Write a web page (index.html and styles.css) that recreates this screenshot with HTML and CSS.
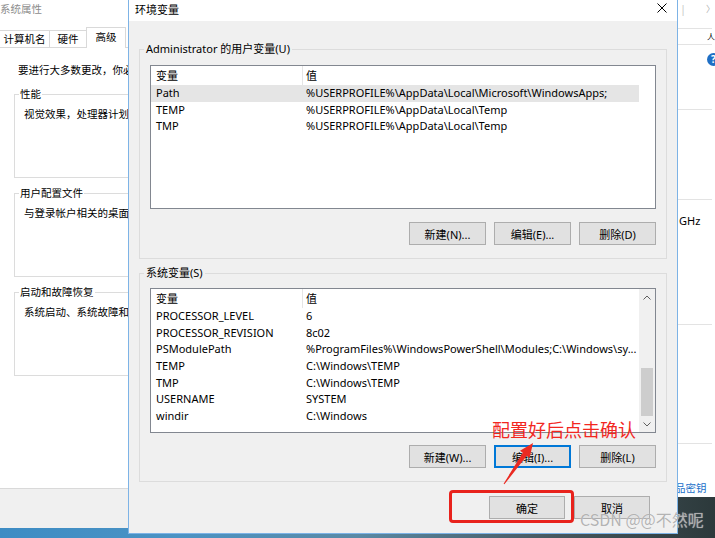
FILE: index.html
```html
<!DOCTYPE html>
<html lang="zh-CN">
<head>
    <meta charset="UTF-8">
    <meta name="viewport" content="width=device-width, initial-scale=1.0">
    <title>环境变量</title>
    <link rel="stylesheet" href="styles.css">
</head>
<body>
    <div class="desktop">
        <!-- 系统属性 (behind, only the left strip shows) -->
        <div class="sys-window">
            <div class="sys-title">系统属性</div>
            <div class="tabs">
                <div class="tab tab-first">计算机名</div>
                <div class="tab tab-hw">硬件</div>
                <div class="tab active">高级</div>
            </div>
            <div class="tab-panel">
                <p class="admin-note">要进行大多数更改，你必</p>
                <fieldset class="sys-group">
                    <legend>性能</legend>
                    <p>视觉效果，处理器计划</p>
                </fieldset>
                <fieldset class="sys-group">
                    <legend>用户配置文件</legend>
                    <p>与登录帐户相关的桌面</p>
                </fieldset>
                <fieldset class="sys-group">
                    <legend>启动和故障恢复</legend>
                    <p>系统启动、系统故障和</p>
                </fieldset>
            </div>
            <div class="sys-footer"></div>
        </div>

        <!-- 右侧窗口 (behind) -->
        <div class="side-window">
            <div class="side-sec side-top"><span class="side-bar">|</span><span class="side-arrow">〉</span></div>
            <div class="side-sec side-s2"><span class="side-glyph">人</span></div>
            <div class="side-sec side-s3"><span class="help-icon">?</span></div>
            <div class="side-sec side-s4"></div>
            <div class="side-sec side-s5"><span class="ghz">GHz</span></div>
            <div class="side-sec side-s6"></div>
            <div class="side-s7"><span class="product-key">品密钥</span></div>
        </div>

        <!-- 环境变量 -->
        <div class="env-dialog">
            <div class="dialog-title">
                <span>环境变量</span>
                <svg class="close-icon" viewBox="0 0 10 10">
                    <path d="M0.5 0.5 L9.5 9.5 M9.5 0.5 L0.5 9.5" stroke="#000" stroke-width="1" fill="none"/>
                </svg>
            </div>
            <div class="dialog-body">
                <fieldset class="var-group">
                    <legend>Administrator 的用户变量(U)</legend>
                    <div class="var-list">
                        <div class="var-rows">
                            <div class="var-row var-head"><span>变量</span><span>值</span></div>
                            <div class="var-row selected"><span>Path</span><span>%USERPROFILE%\AppData\Local\Microsoft\WindowsApps;</span></div>
                            <div class="var-row"><span>TEMP</span><span>%USERPROFILE%\AppData\Local\Temp</span></div>
                            <div class="var-row"><span>TMP</span><span>%USERPROFILE%\AppData\Local\Temp</span></div>
                        </div>
                    </div>
                    <div class="btn-row">
                        <button class="btn">新建(N)...</button>
                        <button class="btn">编辑(E)...</button>
                        <button class="btn">删除(D)</button>
                    </div>
                </fieldset>

                <fieldset class="var-group sys-vars">
                    <legend>系统变量(S)</legend>
                    <div class="var-list">
                        <div class="var-rows">
                            <div class="var-row var-head"><span>变量</span><span>值</span></div>
                            <div class="var-row"><span>PROCESSOR_LEVEL</span><span>6</span></div>
                            <div class="var-row"><span>PROCESSOR_REVISION</span><span>8c02</span></div>
                            <div class="var-row"><span>PSModulePath</span><span>%ProgramFiles%\WindowsPowerShell\Modules;C:\Windows\sy...</span></div>
                            <div class="var-row"><span>TEMP</span><span>C:\Windows\TEMP</span></div>
                            <div class="var-row"><span>TMP</span><span>C:\Windows\TEMP</span></div>
                            <div class="var-row"><span>USERNAME</span><span>SYSTEM</span></div>
                            <div class="var-row"><span>windir</span><span>C:\Windows</span></div>
                        </div>
                        <div class="scrollbar">
                            <div class="scroll-btn scroll-up">
                                <svg viewBox="0 0 8 5"><polyline points="0.5,4.5 4,1 7.5,4.5" stroke="#606060" fill="none"/></svg>
                            </div>
                            <div class="scroll-track"><div class="scroll-thumb"></div></div>
                            <div class="scroll-btn scroll-down">
                                <svg viewBox="0 0 8 5"><polyline points="0.5,0.5 4,4 7.5,0.5" stroke="#606060" fill="none"/></svg>
                            </div>
                        </div>
                    </div>
                    <div class="btn-row">
                        <button class="btn">新建(W)...</button>
                        <button class="btn focused">编辑(I)...</button>
                        <button class="btn">删除(L)</button>
                    </div>
                </fieldset>

                <div class="dialog-footer">
                    <button class="btn">确定</button>
                    <button class="btn">取消</button>
                </div>
            </div>
        </div>

        <!-- 标注 -->
        <div class="annotation-text">配置好后点击确认</div>
        <svg class="annotation-arrow" viewBox="0 0 36 48">
            <polygon points="33,3 29.7,17.8 26.8,15.8 4.4,44.3 3.6,43.7 22.8,12.8 20,10.8" fill="#ea2a22"/>
        </svg>
        <div class="annotation-box"></div>
        <div class="watermark">CSDN @@不然呢</div>
    </div>
</body>
</html>
```

FILE: styles.css
```css
* {
    box-sizing: border-box;
}

body {
    margin: 0;
    font-family: "Noto Sans", "Noto Sans CJK SC", sans-serif;
    font-size: 11px;
    color: #000;
    overflow: hidden;
}

.desktop {
    position: relative;
    width: 715px;
    height: 538px;
    overflow: hidden;
    background: linear-gradient(90deg, #3d8cc4 0%, #4b93c4 25%, #5a8aa6 50%, #46575d 78%, #2c393b 100%);
}

/* 系统属性 */
.sys-window {
    position: absolute;
    left: 0;
    top: 0;
    width: 129px;
    height: 528px;
    background: #fff;
    display: flex;
    flex-direction: column;
    overflow: hidden;
    font-size: 10.5px;
}

.sys-title {
    height: 22px;
    line-height: 18px;
    color: #8c8c8c;
}

.tabs {
    height: 25px;
    display: flex;
    align-items: flex-end;
    margin-left: -1px;
}

.tab {
    height: 17px;
    border: 1px solid #d9d9d9;
    border-bottom: none;
    line-height: 16px;
    text-align: center;
    background: #fff;
    flex-shrink: 0;
}

.tab-first {
    width: 51px;
}

.tab-hw {
    width: 38px;
    margin-left: -1px;
}

.tab.active {
    width: 40px;
    height: 21px;
    margin-left: -1px;
    margin-bottom: -1px;
    line-height: 19px;
    position: relative;
    z-index: 1;
}

.tab-panel {
    width: 420px;
    height: 442px;
    margin-left: -1px;
    border: 1px solid #d9d9d9;
    padding-top: 14px;
    background: #fff;
    flex-shrink: 0;
}

.admin-note {
    margin: 0 0 9px 18px;
    line-height: 16px;
    white-space: nowrap;
}

.sys-group {
    width: 400px;
    height: 91px;
    margin: 0 0 8px 14px;
    padding: 0;
    border: 1px solid #dcdcdc;
}

.sys-group legend {
    margin-left: 4px;
    padding: 0 1px;
    line-height: 14px;
}

.sys-group p {
    margin: 5px 0 0 9px;
    line-height: 16px;
    white-space: nowrap;
}

.sys-footer {
    flex: 1;
    background: #f0f0f0;
}

/* 右侧窗口 */
.side-window {
    position: absolute;
    left: 678px;
    top: 0;
    width: 37px;
    height: 497px;
    background: #fff;
    overflow: hidden;
}

.side-sec {
    margin-right: 3px;
    border-bottom: 1px solid #e3e3e3;
    position: relative;
}

.side-top {
    height: 29px;
    color: #c8c8c8;
    display: flex;
    justify-content: space-between;
    line-height: 17px;
    padding-left: 2px;
}

.side-arrow {
    margin-right: -3px;
    color: #b0b0b0;
    font-size: 9px;
}

.side-s2 {
    height: 16px;
    line-height: 14px;
    text-align: right;
}

.side-glyph {
    margin-right: -3px;
    font-size: 8px;
}

.side-s3 {
    height: 65px;
    padding-top: 8px;
}

.help-icon {
    display: block;
    width: 13px;
    height: 13px;
    margin-left: 29px;
    border-radius: 50%;
    background: #1f6fc5;
    color: #fff;
    font-size: 10px;
    font-weight: bold;
    line-height: 13px;
    text-align: center;
}

.side-s4 {
    height: 90px;
}

.side-s5 {
    height: 125px;
    padding-top: 13px;
    padding-left: 1px;
}

.ghz {
    line-height: 16px;
}

.side-s6 {
    height: 119px;
}

.side-s7 {
    padding-top: 36px;
}

.product-key {
    display: block;
    margin-left: -3px;
    color: #1a6fc9;
    font-size: 10.5px;
    line-height: 16px;
    white-space: nowrap;
}

/* 环境变量 */
.env-dialog {
    position: absolute;
    left: 128px;
    top: -1px;
    width: 550px;
    height: 535px;
    border: 1px solid #7db3e6;
    background: #f0f0f0;
    display: flex;
    flex-direction: column;
    z-index: 2;
}

.dialog-title {
    height: 21px;
    background: #fff;
    display: flex;
    justify-content: space-between;
    align-items: flex-start;
    padding-left: 6px;
    line-height: 19px;
}

.close-icon {
    width: 10px;
    height: 10px;
    margin: 3px 10px 0 0;
}

.dialog-body {
    flex: 1;
    padding: 21px 10px 0;
    display: flex;
    flex-direction: column;
}

.var-group {
    margin: 0;
    padding: 0 10px 13px;
    border: 1px solid #dcdcdc;
    min-width: 0;
}

.var-group legend {
    margin-left: -6px;
    padding: 0 2px;
    line-height: 14px;
}

.sys-vars {
    margin-top: 7px;
}

.var-list {
    margin-top: 9px;
    height: 144px;
    border: 1px solid #828790;
    background: #fff;
    display: flex;
}

.sys-vars .var-list {
    margin-top: 8px;
    height: 145px;
}

.var-rows {
    width: 488px;
}

.var-row {
    display: grid;
    grid-template-columns: 151px 1fr;
    height: 16.67px;
    line-height: 16.67px;
    white-space: nowrap;
}

.var-row span:first-child {
    padding-left: 5px;
}

.var-row span:last-child {
    padding-left: 4px;
    overflow: hidden;
}

.var-row.var-head {
    height: 19px;
    line-height: 19px;
}

.var-head span:last-child {
    border-left: 1px solid #e5e5e5;
    padding-left: 3px;
}

.var-row.selected {
    background: #e5e5e5;
}

.scrollbar {
    width: 16px;
    display: flex;
    flex-direction: column;
    background: #f0f0f0;
}

.scroll-btn {
    display: flex;
    align-items: center;
    justify-content: center;
}

.scroll-btn svg {
    width: 8px;
    height: 5px;
}

.scroll-up {
    height: 17px;
}

.scroll-down {
    height: 16px;
}

.scroll-track {
    flex: 1;
    display: flex;
    flex-direction: column;
    justify-content: flex-end;
}

.scroll-thumb {
    height: 48px;
    margin: 0 2px;
    background: #cdcdcd;
}

.btn-row {
    display: flex;
    justify-content: flex-end;
    gap: 8px;
    margin-top: 13px;
}

.sys-vars .btn-row {
    margin-top: 12px;
}

.btn {
    width: 77px;
    height: 23px;
    padding: 0;
    border: 1px solid #adadad;
    background: #e1e1e1;
    color: #000;
    font: inherit;
}

.btn.focused {
    border-color: #0078d7;
    box-shadow: inset 0 0 0 1px #0078d7;
}

.dialog-footer {
    display: flex;
    justify-content: flex-end;
    gap: 9px;
    margin-top: 14px;
    padding-right: 17px;
}

.dialog-footer .btn {
    width: 76px;
}

/* 标注 */
.annotation-text {
    position: absolute;
    left: 492px;
    top: 418px;
    z-index: 3;
    font-family: "Noto Sans CJK SC", sans-serif;
    font-size: 18px;
    line-height: 22px;
    color: #f2271f;
}

.annotation-arrow {
    position: absolute;
    left: 500px;
    top: 440px;
    width: 36px;
    height: 48px;
    z-index: 3;
}

.annotation-box {
    position: absolute;
    left: 449px;
    top: 490px;
    width: 125px;
    height: 33px;
    z-index: 3;
    border: 3px solid #e8221c;
    border-radius: 4px;
}

.watermark {
    position: absolute;
    left: 580px;
    top: 508px;
    z-index: 4;
    font-family: "Noto Sans CJK SC", sans-serif;
    font-size: 16px;
    line-height: 22px;
    color: rgba(175, 175, 175, 0.95);
    text-shadow: 0 0 1px rgba(255, 255, 255, 0.6);
    white-space: nowrap;
}
```
